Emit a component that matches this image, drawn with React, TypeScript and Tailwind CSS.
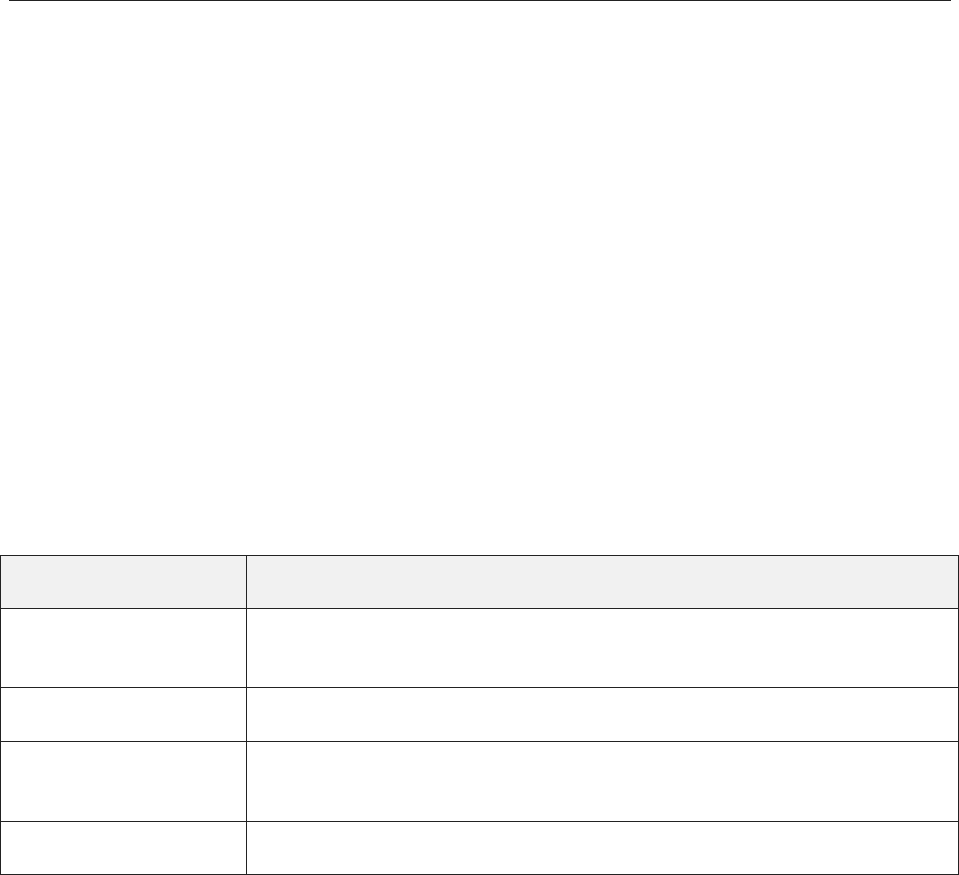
import React from "react";

const rows = [53, 79, 54, 80, 53];

export default function App() {
  return (
    <div className="w-[959px] h-[875px] bg-white overflow-hidden" style={{ fontFamily: "'Liberation Sans', Arial, sans-serif" }}>
      <div className="ml-[9px] w-[942px] h-px bg-[#222222]" />
      <div className="h-[554px]" />
      <table className="w-[959px] table-fixed border-collapse">
        <colgroup>
          <col className="w-[246px]" />
          <col />
        </colgroup>
        <tbody>
          {rows.map((h, i) => (
            <tr key={i} className={i === 0 ? "bg-[#f1f1f1]" : "bg-white"} style={{ height: h }}>
              <td className="border border-[#222222] p-0"></td>
              <td className="border border-[#222222] p-0"></td>
            </tr>
          ))}
        </tbody>
      </table>
    </div>
  );
}
